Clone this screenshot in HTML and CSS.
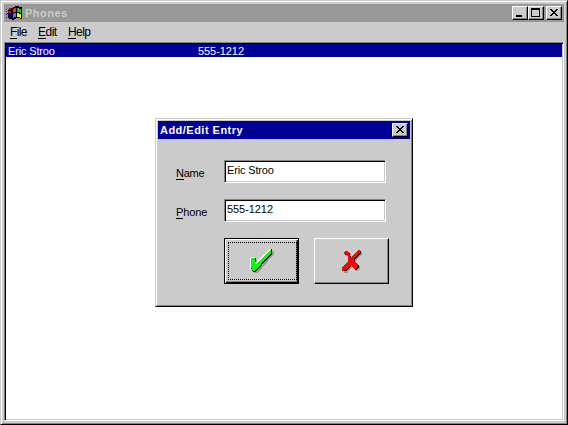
FILE: index.html
```
<!DOCTYPE html>
<html lang="en">
<head>
<meta charset="utf-8">
<title>Phones</title>
<link rel="stylesheet" href="styles.css">
</head>
<body>
<main class="window">
  <header class="titlebar inactive">
    <svg class="logo" width="16" height="16" viewBox="0 0 16 16" shape-rendering="crispEdges">
      <path d="M5 3h2V2h2V1h4v1h3v12h-2v-1h-4v1H8v1H6v-2H5z" fill="#000"/>
      <path d="M7 4h1V3h2v4H8v1H7z" fill="#f22"/>
      <path d="M11 3h2v1h2v4h-1V7h-3z" fill="#0c3"/>
      <path d="M7 9h1V8h2v4H8v1H7z" fill="#38f"/>
      <path d="M11 8h2v1h2v4h-1v-1h-3z" fill="#fe0"/>
      <path d="M0 4h1v1H0zM2 4h2v1H2zM0 6h1v1H0zM2 6h3v2H2zM3 3h2v2H3z" fill="#c00"/>
      <path d="M0 9h1v1H0zM2 9h3v2H2zM0 12h1v1H0zM2 12h3v1H2z" fill="#00a"/>
      <path d="M2 5h3v1H2zM1 8h4v1H1zM2 11h3v1H2zM3 13h3v1H3z" fill="#000"/>
    </svg>
    <h1 class="title">Phones</h1>
    <div class="controls">
      <button class="control" aria-label="Minimize"><svg width="12" height="10" shape-rendering="crispEdges"><path d="M2 7h6v2H2z"/></svg></button>
      <button class="control" aria-label="Maximize"><svg width="12" height="10" shape-rendering="crispEdges"><path fill-rule="evenodd" d="M1 0h9v9H1zM2 2v6h7V2z"/></svg></button>
      <button class="control close" aria-label="Close"><svg width="12" height="10" shape-rendering="crispEdges"><path d="M2 1h2v1h1v1h2V2h1V1h2v1H9v1H8v1H7v1h1v1h1v1h1v1H8V7H7V6H5v1H4v1H2V7h1V6h1V5h1V4H4V3H3V2H2z"/></svg></button>
    </div>
  </header>
  <nav class="menu"><span class="file"><u>F</u>ile</span><span class="edit"><u>E</u>dit</span><span class="help"><u>H</u>elp</span></nav>
  <section class="list">
    <div class="row"><span class="entry-name">Eric Stroo</span><span class="entry-phone">555-1212</span></div>
  </section>
</main>
<section class="dialog" role="dialog">
  <header class="titlebar">
    <h2 class="title">Add/Edit Entry</h2>
    <div class="controls">
      <button class="control" aria-label="Close"><svg width="12" height="10" shape-rendering="crispEdges"><path d="M2 1h2v1h1v1h2V2h1V1h2v1H9v1H8v1H7v1h1v1h1v1h1v1H8V7H7V6H5v1H4v1H2V7h1V6h1V5h1V4H4V3H3V2H2z"/></svg></button>
    </div>
  </header>
  <form class="form">
    <label class="label name-label"><u>N</u>ame</label><div class="field name-field">Eric Stroo</div>
    <label class="label phone-label"><u>P</u>hone</label><div class="field phone-field">555-1212</div>
    <div class="actions">
      <button type="button" class="action default" aria-label="OK">
        <span class="focus"><svg width="26" height="26" viewBox="0 0 26 26" shape-rendering="crispEdges">
          <path d="M2 12h5v5h1L21 3h3v3L12 20l-5 5H4v-2H3z" fill="#999"/>
          <path d="M1 10h5v6h1L20 1h2v5L12 16v1l-6 7H3v-1H2v-2H1z" fill="#000"/>
          <path d="M0 10h1V9h4v5h1L19 1h2v1L6 17H5v-6H1v10H0z" fill="#fff"/>
          <path d="M1 10h4v6h1L21 2v3L11 15v1l-6 7H3v-1H2v-2H1z" fill="#0f0"/>
        </svg></span>
      </button>
      <button type="button" class="action cancel" aria-label="Cancel">
        <svg width="24" height="26" viewBox="0 0 24 26" shape-rendering="crispEdges">
          <g fill="#999" transform="translate(2 2)"><path d="M5 3h3v1h1v3h1v2h2l6-7h2v2l-6 7v2l4 4v2h-1v1h-1v1h-2l-4-4-4 4v2H2v-4l6-6V9L6 6H4V4h1z"/></g>
          <g fill="#000" transform="translate(1 1)"><path d="M5 3h3v1h1v3h1v2h2l6-7h2v2l-6 7v2l4 4v2h-1v1h-1v1h-2l-4-4-4 4v1H2v-3l6-6V9L6 6H4V4h1z"/></g>
          <path d="M5 3h3v1h1v3h1v2h2l6-7h2v2l-6 7v2l4 4v2h-1v1h-1v1h-2l-4-4-4 4v1H4v1H2v-4l6-6V9L6 6H4V4h1z" fill="#f00"/>
        </svg>
      </button>
    </div>
  </form>
</section>
</body>
</html>
```

FILE: styles.css
```
* { box-sizing: border-box; }
body {
  margin: 0;
  width: 568px;
  height: 425px;
  overflow: hidden;
  font: 11px/13px "Liberation Sans", Arial, sans-serif;
  color: #000;
}
u { text-decoration: none; border-bottom: 1px solid #000; display: inline-block; height: 13px; }
svg { display: block; }
.window {
  width: 568px;
  height: 425px;
  padding: 2px;
  display: flex;
  flex-direction: column;
  background: #cbcbcb;
  border: 1px solid;
  border-color: #cbcbcb #000 #000 #cbcbcb;
  box-shadow: inset 1px 1px #fff, inset -1px -1px #868686;
}
.window > * { margin-left: 1px; margin-right: 0; }
.titlebar {
  height: 18px;
  flex: none;
  display: flex;
  align-items: center;
  padding: 0 2px;
  background: #000098;
  color: #fff;
}
.inactive { background: #989898; color: #cbcbcb; margin: 1px 1px 0 1px; }
.logo { flex: none; }
.title { margin: 0; flex: 1; font-size: 11px; line-height: 14px; font-weight: bold; white-space: nowrap; }
.inactive .title { padding-left: 3px; letter-spacing: .5px; }
.controls { display: flex; }
.control {
  width: 16px;
  height: 14px;
  padding: 1px;
  background: #cbcbcb;
  border: 1px solid;
  border-color: #fff #000 #000 #fff;
  box-shadow: inset -1px -1px #868686;
}
.close { margin-left: 2px; }
.menu { height: 20px; display: flex; padding: 4px 6px 0; font-size: 12px; }
.menu span { width: 30px; white-space: nowrap; }
.menu .file { width: 28px; letter-spacing: -.6px; }
.menu .edit { letter-spacing: -.5px; }
.menu .help { letter-spacing: -.6px; }
.list {
  height: 379px;
  width: 560px;
  padding: 1px;
  background: #fff;
  border: 1px solid;
  border-color: #868686 #fff #fff #868686;
  box-shadow: inset 1px 1px #000, inset -1px -1px #cbcbcb;
}
.row { height: 13px; display: flex; padding-left: 2px; background: #000098; color: #fff; line-height: 14px; }
.entry-name { width: 190px; letter-spacing: -.15px; }
.entry-phone { letter-spacing: -.07px; }
.dialog {
  position: absolute;
  left: 155px;
  top: 118px;
  width: 258px;
  height: 189px;
  padding: 2px 2px 1px 2px;
  background: #cbcbcb;
  border: 1px solid;
  border-color: #cbcbcb #000 #000 #cbcbcb;
  box-shadow: inset 1px 1px #fff, inset -1px -1px #868686;
}
.dialog .title { letter-spacing: .48px; }
.form {
  display: grid;
  grid-template-columns: 48px 162px;
  grid-template-rows: 23px 23px 46px;
  row-gap: 16px;
  padding: 21px 0 0 18px;
}
.label { padding-top: 7px; white-space: nowrap; }
.name-label { letter-spacing: -.25px; }
.phone-label { letter-spacing: -.1px; }
.field {
  padding: 3px 2px 0;
  height: 23px;
  background: #fff;
  border: 1px solid;
  border-color: #868686 #fff #fff #868686;
  box-shadow: inset 1px 1px #000, inset -1px -1px #cbcbcb;
}
.name-field { letter-spacing: -.15px; }
.phone-field { letter-spacing: -.07px; }
.actions { grid-column: 2; display: flex; gap: 15px; width: 165px; }
.action {
  width: 75px;
  height: 46px;
  padding: 0;
  display: flex;
  align-items: center;
  justify-content: center;
  background: #cbcbcb;
  border: 1px solid;
  border-color: #fff #000 #000 #fff;
  box-shadow: inset -1px -1px #868686;
}
.default { padding-left: 2px; border-color: #000; box-shadow: inset 1px 1px #fff, inset -1px -1px #000, inset -2px -2px #868686; }
.cancel { padding-left: 1px; }
.focus { width: 69px; height: 38px; border: 1px dotted #000; padding: 5px 0 0 21px; }
```
